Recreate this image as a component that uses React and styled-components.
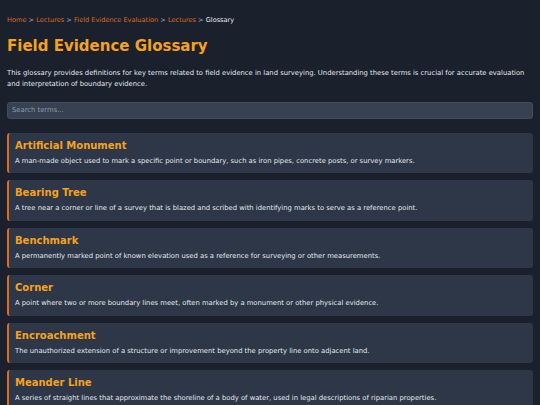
import React, { useState } from "react";
import styled, { createGlobalStyle } from "styled-components";

const Global = createGlobalStyle`
  html, body { margin: 0; padding: 0; background: #1a202c; }
  body { font-family: "DejaVu Sans", Verdana, sans-serif; color: #e2e8f0; }
  * { box-sizing: border-box; }
`;

const Page = styled.div`
  padding: 15px 7px 0;
  min-height: 405px;
  background: #1a202c;
`;

const Crumbs = styled.nav`
  font-size: 6.6px;
  line-height: 10px;
  color: #a0aec0;
  white-space: pre;
`;

const CrumbLink = styled.a`
  color: #dd6b20;
  text-decoration: none;
`;

const CrumbCurrent = styled.span`
  color: #e2e8f0;
`;

const Title = styled.h1`
  margin: 12px 0 0;
  font-size: 15px;
  line-height: 18px;
  font-weight: bold;
  color: #f6a21c;
`;

const Intro = styled.p`
  margin: 13px 0 0;
  font-size: 6.8px;
  line-height: 11px;
  color: #e2e8f0;
`;

const Search = styled.input`
  display: block;
  width: 100%;
  margin-top: 11.5px;
  height: 17px;
  padding: 0 4px;
  border: 1px solid #414c5e;
  border-radius: 3px;
  background: #374151;
  color: #e2e8f0;
  font-family: inherit;
  font-size: 6.8px;
  outline: none;
  &::placeholder { color: #8f9bb0; }
`;

const List = styled.div`
  display: flex;
  flex-direction: column;
  gap: 7px;
  margin-top: 14px;
`;

const Card = styled.div`
  background: #2d3748;
  border-left: 2px solid #dd6b20;
  border-radius: 3px;
  padding: 7px 6px 6.5px 6px;
`;

const Term = styled.h2`
  margin: 0;
  font-size: 10px;
  line-height: 12px;
  font-weight: bold;
  color: #f6a21c;
`;

const Def = styled.p`
  margin: 4px 0 0;
  font-size: 6.8px;
  line-height: 11px;
  color: #e2e8f0;
`;

const terms = [
  ["Artificial Monument", "A man-made object used to mark a specific point or boundary, such as iron pipes, concrete posts, or survey markers."],
  ["Bearing Tree", "A tree near a corner or line of a survey that is blazed and scribed with identifying marks to serve as a reference point."],
  ["Benchmark", "A permanently marked point of known elevation used as a reference for surveying or other measurements."],
  ["Corner", "A point where two or more boundary lines meet, often marked by a monument or other physical evidence."],
  ["Encroachment", "The unauthorized extension of a structure or improvement beyond the property line onto adjacent land."],
  ["Meander Line", "A series of straight lines that approximate the shoreline of a body of water, used in legal descriptions of riparian properties."],
];

export default function App() {
  const [q, setQ] = useState("");
  const shown = terms.filter(([t, d]) => (t + " " + d).toLowerCase().includes(q.toLowerCase()));
  return (
    <>
      <Global />
      <Page>
        <Crumbs>
          <CrumbLink href="#">Home</CrumbLink>{" > "}
          <CrumbLink href="#">Lectures</CrumbLink>{" > "}
          <CrumbLink href="#">Field Evidence Evaluation</CrumbLink>{" > "}
          <CrumbLink href="#">Lectures</CrumbLink>{" > "}
          <CrumbCurrent>Glossary</CrumbCurrent>
        </Crumbs>
        <Title>Field Evidence Glossary</Title>
        <Intro>
          This glossary provides definitions for key terms related to field evidence in land surveying. Understanding these terms is crucial for accurate evaluation and interpretation of boundary evidence.
        </Intro>
        <Search placeholder="Search terms..." value={q} onChange={(e) => setQ(e.target.value)} />
        <List>
          {shown.map(([t, d]) => (
            <Card key={t}>
              <Term>{t}</Term>
              <Def>{d}</Def>
            </Card>
          ))}
        </List>
      </Page>
    </>
  );
}
